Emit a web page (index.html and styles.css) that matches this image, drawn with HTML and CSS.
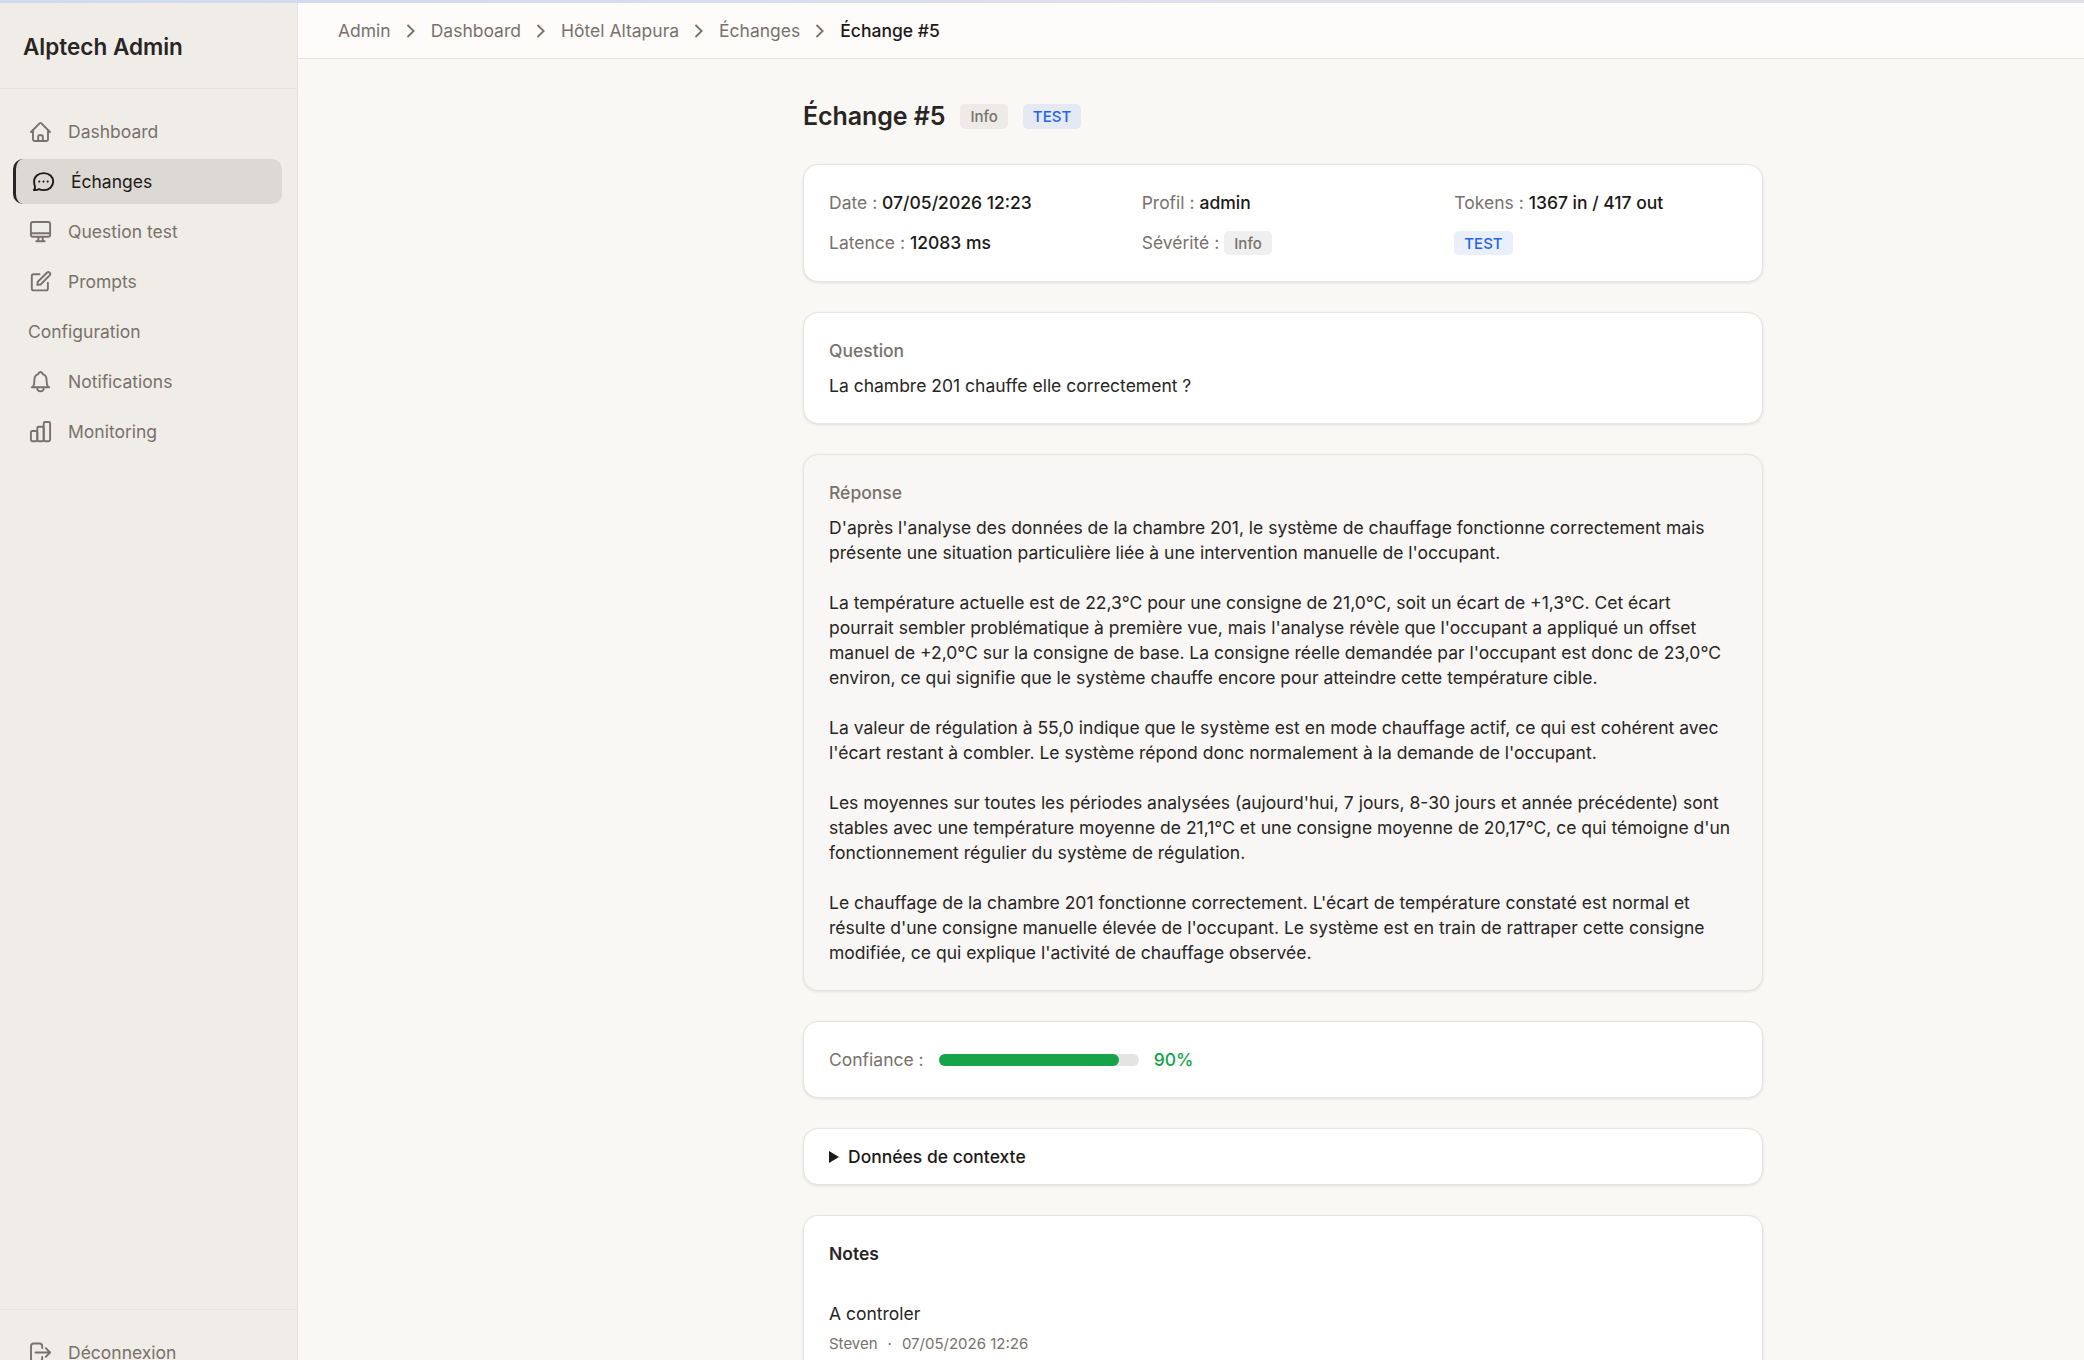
FILE: index.html
```html
<!DOCTYPE html>
<html lang="fr">
<head>
<meta charset="utf-8">
<title>Échange #5 – Alptech Admin</title>
<link rel="stylesheet" href="styles.css">
</head>
<body>
<div class="loading-strip"></div>
<div class="app">
  <aside class="sidebar">
    <div class="brand">Alptech Admin</div>
    <nav class="nav">
      <a class="nav-item"><svg class="icon" viewBox="0 0 25 25"><path d="M3 13 11.8 4.2q.7-.7 1.4 0L22 13M5 11v9.6q0 1.4 1.4 1.4h12.2q1.4 0 1.4-1.4V11M10.2 22v-4.6q0-1.2 1.2-1.2h2.2q1.2 0 1.2 1.2V22"/></svg>Dashboard</a>
      <a class="nav-item active"><svg class="icon" viewBox="0 0 25 25"><path d="M12.8 4.1c5.4 0 9.4 3.6 9.4 8.5s-4 8.5-9.4 8.500c-1.900 0-3.500-.4-4.900-1-1.200.9-3 1.200-5 1 .9-1 1.300-2.200 1.100-3.400-.6-1.400-.9-3.100-.9-5.100 0-5 4-8.500 9.700-8.500Z"/><path class="dots" d="M8.300 12.600h.01M12.500 12.600h.01M16.700 12.600h.01"/></svg>Échanges</a>
      <a class="nav-item"><svg class="icon" viewBox="0 0 25 25"><rect x="2.900" y="3" width="19.200" height="14.800" rx="2"/><path d="M3 14.200h19M10.700 18l-.7 4M14.300 18l.7 4M8.300 22.200h8.400"/></svg>Question test</a>
      <a class="nav-item"><svg class="icon" viewBox="0 0 25 25"><path d="M11.500 5.300H5.700q-1.900 0-1.900 1.900v12.300q0 1.900 1.900 1.900H18q1.900 0 1.900-1.900v-5.700"/><path d="M9.300 15.900l.5-3.200 9.100-9a1.900 1.900 0 0 1 2.700 2.700l-9 9.100Z"/></svg>Prompts</a>
      <a class="nav-item">Configuration</a>
      <a class="nav-item"><svg class="icon" viewBox="0 0 25 25"><path d="M3.800 18.200h17.400M4.700 18.200c1.300-1.600 1.700-3.600 1.700-7.400 0-2.700 1.400-4.700 3.700-5.600.5-1.500 1.300-2.200 2.400-2.200s1.900.7 2.400 2.200c2.300.9 3.700 2.900 3.700 5.600 0 3.800.4 5.800 1.700 7.400M9.200 18.500c0 2.500 1.300 3.800 3.300 3.800s3.300-1.300 3.300-3.800"/></svg>Notifications</a>
      <a class="nav-item"><svg class="icon" viewBox="0 0 25 25"><rect x="2.900" y="12" width="6.400" height="10.200" rx="1.400"/><rect x="9.300" y="7.800" width="6.400" height="14.400" rx="1.400"/><rect x="15.700" y="3" width="6.400" height="19.200" rx="1.400"/></svg>Monitoring</a>
    </nav>
    <div class="sidebar-foot">
      <a class="nav-item"><svg class="icon" viewBox="0 0 25 25"><path d="M14.200 8V6.200q0-2.700-2.700-2.700H5.700Q3 3.500 3 6.200v12.600q0 2.700 2.700 2.700h5.800q2.700 0 2.700-2.700V17M7.500 12.500H22M17.800 8.200l4.300 4.300-4.300 4.300"/></svg>Déconnexion</a>
    </div>
  </aside>
  <div class="main">
    <header class="topbar">
      <span>Admin</span><svg class="chev" viewBox="0 0 10 14"><path d="M1.500 1 7.700 7 1.500 13"/></svg>
      <span>Dashboard</span><svg class="chev" viewBox="0 0 10 14"><path d="M1.500 1 7.700 7 1.500 13"/></svg>
      <span>Hôtel Altapura</span><svg class="chev" viewBox="0 0 10 14"><path d="M1.500 1 7.700 7 1.500 13"/></svg>
      <span>Échanges</span><svg class="chev" viewBox="0 0 10 14"><path d="M1.500 1 7.700 7 1.500 13"/></svg>
      <span class="current">Échange #5</span>
    </header>
    <main class="content">
      <div class="title-row"><h1>Échange #5</h1><span class="badge">Info</span><span class="badge blue">TEST</span></div>
      <section class="card meta">
        <div>Date : <b>07/05/2026 12:23</b></div>
        <div>Profil : <b>admin</b></div>
        <div>Tokens : <b>1367 in / 417 out</b></div>
        <div>Latence : <b>12083 ms</b></div>
        <div class="with-badge">Sévérité : <span class="badge">Info</span></div>
        <div class="with-badge"><span class="badge blue">TEST</span></div>
      </section>
      <section class="card">
        <h2>Question</h2>
        <p>La chambre 201 chauffe elle correctement ?</p>
      </section>
      <section class="card answer">
        <h2>Réponse</h2>
        <p>D'après l'analyse des données de la chambre 201, le système de chauffage fonctionne correctement mais
présente une situation particulière liée à une intervention manuelle de l'occupant.

La température actuelle est de 22,3°C pour une consigne de 21,0°C, soit un écart de +1,3°C. Cet écart
pourrait sembler problématique à première vue, mais l'analyse révèle que l'occupant a appliqué un offset
manuel de +2,0°C sur la consigne de base. La consigne réelle demandée par l'occupant est donc de 23,0°C
environ, ce qui signifie que le système chauffe encore pour atteindre cette température cible.

La valeur de régulation à 55,0 indique que le système est en mode chauffage actif, ce qui est cohérent avec
l'écart restant à combler. Le système répond donc normalement à la demande de l'occupant.

Les moyennes sur toutes les périodes analysées (aujourd'hui, 7 jours, 8-30 jours et année précédente) sont
stables avec une température moyenne de 21,1°C et une consigne moyenne de 20,17°C, ce qui témoigne d'un
fonctionnement régulier du système de régulation.

Le chauffage de la chambre 201 fonctionne correctement. L'écart de température constaté est normal et
résulte d'une consigne manuelle élevée de l'occupant. Le système est en train de rattraper cette consigne
modifiée, ce qui explique l'activité de chauffage observée.</p>
      </section>
      <section class="card confidence">
        <span>Confiance :</span>
        <div class="track"><div class="fill" style="width:90%"></div></div>
        <span class="percent">90%</span>
      </section>
      <section class="card context"><svg class="caret" viewBox="0 0 10 12"><path d="M0 0 10 6 0 12Z"/></svg>Données de contexte</section>
      <section class="card notes">
        <h3>Notes</h3>
        <p>A controler</p>
        <div class="byline"><span>Steven</span><span>·</span><span>07/05/2026 12:26</span></div>
      </section>
    </main>
  </div>
</div>
</body>
</html>
```
FILE: styles.css
```css
* { box-sizing: border-box; }
body {
  margin: 0;
  height: 1360px;
  overflow: hidden;
  display: flex;
  flex-direction: column;
  background: #f9f8f5;
  color: #292524;
  font: 400 17.5px/25px Inter, "Liberation Sans", sans-serif;
}
h1, h2, h3, p { margin: 0; }
.loading-strip {
  flex: none;
  height: 3px;
  background: linear-gradient(90deg, #cfdaf1, #dfdfee 60%, #dfdfee);
}
.app { flex: 1; min-height: 0; display: flex; }

.sidebar {
  flex: none;
  width: 298px;
  display: flex;
  flex-direction: column;
  background: #f0ede8;
  border-right: 1px solid #e5e3e0;
  color: #79716b;
}
.brand {
  height: 86px;
  padding: 29px 23px 0;
  border-bottom: 1px solid #e5e3e0;
  color: #292524;
  font-size: 22.5px;
  font-weight: 600;
  line-height: 30px;
}
.nav {
  flex: 1;
  display: flex;
  flex-direction: column;
  gap: 5px;
  padding: 20px 15px 0 13px;
}
.nav-item {
  flex: none;
  height: 45px;
  padding: 0 15px;
  display: flex;
  align-items: center;
  gap: 15px;
  border-radius: 10px;
}
.nav-item.active {
  background: #dcd9d4;
  border-left: 3px solid #292524;
  color: #1c1917;
}
.icon {
  width: 25px;
  height: 25px;
  fill: none;
  stroke: currentColor;
  stroke-width: 1.9;
  stroke-linecap: round;
  stroke-linejoin: round;
}
.dots { stroke-width: 2.1; }
.sidebar-foot {
  height: 51px;
  padding: 20px 15px 0 13px;
  border-top: 1px solid #e5e3e0;
}

.main { flex: 1; min-width: 0; display: flex; flex-direction: column; }
.topbar {
  flex: none;
  height: 56px;
  padding: 0 40px;
  display: flex;
  align-items: center;
  background: #fdfcfb;
  border-bottom: 1px solid #e5e3e0;
  color: #79716b;
}
.chev {
  width: 10px;
  height: 14px;
  margin: 0 15px;
  fill: none;
  stroke: #79716b;
  stroke-width: 1.8;
}
.current { color: #1c1917; font-weight: 500; }

.content {
  flex: 1;
  min-height: 0;
  width: 960px;
  margin-left: 505px;
  padding-top: 40px;
  display: flex;
  flex-direction: column;
  gap: 30px;
}
.title-row { flex: none; height: 35px; display: flex; align-items: center; gap: 15px; }
h1 { font-size: 25px; font-weight: 600; line-height: 35px; letter-spacing: -.08px; }
.badge {
  display: inline-flex;
  align-items: center;
  height: 25px;
  padding: 0 10px;
  border-radius: 5px;
  background: #edeae7;
  color: #79716b;
  font-size: 15px;
  font-weight: 500;
}
.badge.blue { background: #e4e9f4; color: #2563eb; }

.card {
  flex: none;
  padding: 25px;
  background: #fff;
  border: 1px solid #e5e4e2;
  border-radius: 15px;
  box-shadow: 0 1px 3px rgba(0, 0, 0, .1);
}
.meta {
  height: 118px;
  display: grid;
  grid-template-columns: repeat(3, 1fr);
  grid-auto-rows: 25px;
  gap: 15px 30px;
  color: #79716b;
}
.meta b { color: #1c1917; font-weight: 500; }
.with-badge { display: flex; align-items: center; gap: 5px; }
.with-badge .badge { height: 24px; margin-top: 1px; background: #efefef; }
.with-badge .badge.blue { background: #e9effd; }
h2 { margin-bottom: 10px; color: #79716b; font-size: 17.5px; font-weight: 500; line-height: 25px; }
.answer { background: #f8f7f5; }
.answer p { white-space: pre; }
.confidence { display: flex; align-items: center; gap: 15px; color: #79716b; }
.track { width: 200px; height: 12px; border-radius: 6px; background: #e5e4e2; }
.fill { height: 12px; border-radius: 6px; background: #16a34a; }
.percent { color: #16a34a; font-weight: 500; }
.context { display: flex; align-items: center; padding: 15px 25px; color: #1c1917; font-weight: 500; }
.caret { width: 10px; height: 12px; margin-right: 9px; fill: #1c1917; }
.notes { flex: 1 0 0; padding-bottom: 0; border-bottom: 0; border-radius: 15px 15px 0 0; }
h3 { margin-bottom: 35px; font-size: 17.5px; font-weight: 600; line-height: 25px; }
.byline { display: flex; gap: 10px; margin-top: 8px; color: #79716b; font-size: 15px; line-height: 20px; }
```
